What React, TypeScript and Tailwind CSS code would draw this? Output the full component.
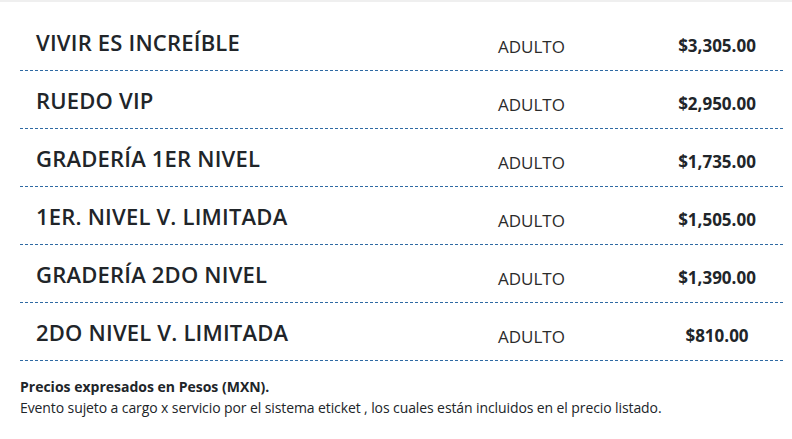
const rows = [
  { name: "VIVIR ES INCREÍBLE", type: "ADULTO", price: "$3,305.00" },
  { name: "RUEDO VIP", type: "ADULTO", price: "$2,950.00" },
  { name: "GRADERÍA 1ER NIVEL", type: "ADULTO", price: "$1,735.00" },
  { name: "1ER. NIVEL V. LIMITADA", type: "ADULTO", price: "$1,505.00" },
  { name: "GRADERÍA 2DO NIVEL", type: "ADULTO", price: "$1,390.00" },
  { name: "2DO NIVEL V. LIMITADA", type: "ADULTO", price: "$810.00" },
];

export default function App() {
  return (
    <div
      className="min-h-screen w-full bg-white text-[#212529]"
      style={{ fontFamily: '"Open Sans", "Noto Sans", sans-serif' }}
    >
      <div className="h-[2px] bg-[#efefef]" />

      <div className="px-5 pt-[11px]">
        {rows.map((r) => (
          <div
            key={r.name}
            className="mr-[-11px] flex h-[58px] items-center border-b border-dashed border-[#2f6aa3]"
          >
            <div className="w-[478px] shrink-0 pl-4 text-[22px] font-semibold leading-none tracking-[0.2px]">
              {r.name}
            </div>
            <div className="w-[160px] shrink-0 pt-[10px] text-[17px] leading-none text-[#2b2b2b]">
              {r.type}
            </div>
            <div className="w-[118px] shrink-0 pt-[8px] text-center text-[17px] font-bold leading-none">
              {r.price}
            </div>
          </div>
        ))}
      </div>

      <div className="px-5 pt-[15px] leading-[21px]">
        <p className="text-[14px] font-bold">Precios expresados en Pesos (MXN).</p>
        <p className="text-[14px] tracking-[-0.1px]">
          Evento sujeto a cargo x servicio por el sistema eticket , los cuales
          están incluidos en el precio listado.
        </p>
      </div>
    </div>
  );
}
